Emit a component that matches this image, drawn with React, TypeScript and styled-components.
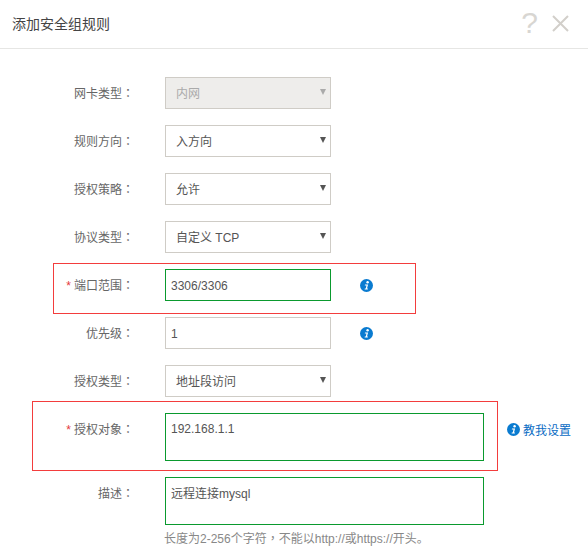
import React from 'react';
import styled, { createGlobalStyle } from 'styled-components';

const GlobalStyle = createGlobalStyle`
  html, body {
    margin: 0;
    background: #fff;
  }
  body {
    font-family: "Liberation Sans", "Noto Sans CJK SC", sans-serif;
    font-size: 12px;
    color: #666;
  }
`;

function InfoIcon() {
  return (
    <svg width="13" height="13" viewBox="0 0 13 13" aria-hidden="true">
      <circle cx="6.5" cy="6.5" r="6.5" fill="#0a7bd0" />
      <circle cx="7.6" cy="3.2" r="1.2" fill="#fff" />
      <path d="M5 5.4h3.1L7 9.6h1l-.2 1H4.6l.2-1h.9l.8-3.2H4.8z" fill="#fff" />
    </svg>
  );
}

function SelectField({ value, disabled }: { value: string; disabled?: boolean }) {
  return (
    <SelectWrap $disabled={disabled}>
      <SelectBox defaultValue={value} disabled={disabled}>
        <option>{value}</option>
      </SelectBox>
    </SelectWrap>
  );
}

function App() {
  return (
    <>
      <GlobalStyle />
      <Dialog>
        <Header>
          <Title>添加安全组规则</Title>
          <HeaderIcons>
            <HelpMark>?</HelpMark>
            <svg width="17" height="17" viewBox="0 0 17 17" aria-hidden="true">
              <path d="M1 1l15 15M16 1L1 16" stroke="#d2cfca" strokeWidth="2" fill="none" />
            </svg>
          </HeaderIcons>
        </Header>
        <Form>
          <Row>
            <Label>网卡类型<Centered>：</Centered></Label>
            <SelectField value="内网" disabled />
          </Row>
          <Row>
            <Label>规则方向<Centered>：</Centered></Label>
            <SelectField value="入方向" />
          </Row>
          <Row>
            <Label>授权策略<Centered>：</Centered></Label>
            <SelectField value="允许" />
          </Row>
          <Row>
            <Label>协议类型<Centered>：</Centered></Label>
            <SelectField value="自定义 TCP" />
          </Row>
          <Row>
            <PortMark />
            <Label><Star>*</Star>端口范围<Centered>：</Centered></Label>
            <TextInput $marked defaultValue="3306/3306" readOnly />
            <Aside><InfoIcon /></Aside>
          </Row>
          <Row>
            <Label>优先级<Centered>：</Centered></Label>
            <TextInput defaultValue="1" readOnly />
            <Aside><InfoIcon /></Aside>
          </Row>
          <Row>
            <Label>授权类型<Centered>：</Centered></Label>
            <SelectField value="地址段访问" />
          </Row>
          <Row>
            <ObjectMark />
            <Label><Star>*</Star>授权对象<Centered>：</Centered></Label>
            <TextArea $top={8} defaultValue="192.168.1.1" readOnly />
            <HelpLink><InfoIcon />教我设置</HelpLink>
          </Row>
          <Row>
            <Label>描述<Centered>：</Centered></Label>
            <div>
              <TextArea $top={6} defaultValue="远程连接mysql" readOnly />
              <Hint>长度为2-256个字符<Centered>，</Centered>不能以http://或https://开头。</Hint>
            </div>
          </Row>
        </Form>
      </Dialog>
    </>
  );
}

const Dialog = styled.div`
  width: 588px;
  height: 559px;
  overflow: hidden;
`;

const Header = styled.header`
  display: flex;
  align-items: center;
  justify-content: space-between;
  box-sizing: border-box;
  height: 49px;
  padding: 0 19px 2px 12px;
  border-bottom: 1px solid #e6e6e4;
`;

const Title = styled.h1`
  margin: 0;
  font-size: 14px;
  font-weight: 400;
  color: #444;
`;

const HeaderIcons = styled.div`
  display: flex;
  align-items: center;
  gap: 14px;
`;

const HelpMark = styled.span`
  font-size: 30px;
  line-height: 30px;
  color: #d8d6d2;
`;

const Form = styled.div`
  display: flex;
  flex-direction: column;
  gap: 16px;
  padding-top: 28px;
`;

const Row = styled.div`
  position: relative;
  display: flex;
  align-items: flex-start;
`;

const Label = styled.label`
  flex: none;
  box-sizing: border-box;
  width: 165px;
  height: 32px;
  padding-right: 31px;
  line-height: 34px;
  text-align: right;
  color: #666;
`;

/* traditional-chinese punctuation sits in the middle of its cell */
const Centered = styled.span`
  font-family: "Noto Sans CJK TC", sans-serif;
  line-height: 1;
`;

const Star = styled.span`
  margin-right: 3px;
  color: #e4393c;
`;

const SelectWrap = styled.div<{ $disabled?: boolean }>`
  position: relative;
  width: 166px;
  height: 32px;

  &::after {
    content: '';
    position: absolute;
    top: 12px;
    right: 5px;
    border-style: solid;
    border-width: 6px 3px 0;
    border-color: ${(p) => (p.$disabled ? '#aaa' : '#555')} transparent transparent;
    pointer-events: none;
  }
`;

const SelectBox = styled.select`
  display: block;
  box-sizing: border-box;
  width: 100%;
  height: 100%;
  padding: 2px 10px 0;
  appearance: none;
  border: 1px solid #cfccc6;
  border-radius: 0;
  outline: none;
  background: #fff;
  font: inherit;
  color: #555;
  opacity: 1;

  &:disabled {
    background: #eeedeb;
    color: #aaa;
  }
`;

const TextInput = styled.input<{ $marked?: boolean }>`
  box-sizing: border-box;
  width: 166px;
  height: 32px;
  padding: 2px 5px 0;
  border: 1px solid ${(p) => (p.$marked ? '#0a9a2e' : '#cfccc6')};
  outline: none;
  font: inherit;
  color: #555;
`;

const TextArea = styled.textarea<{ $top: number }>`
  display: block;
  box-sizing: border-box;
  width: 319px;
  height: 48px;
  padding: ${(p) => p.$top}px 5px 6px;
  border: 1px solid #0a9a2e;
  outline: none;
  resize: none;
  font: inherit;
  color: #555;
`;

const Aside = styled.span`
  display: flex;
  align-items: center;
  height: 32px;
  margin-left: 29px;
`;

const HelpLink = styled.a`
  display: flex;
  align-items: center;
  gap: 3px;
  height: 32px;
  margin-left: 23px;
  color: #0a6cc4;
`;

const Hint = styled.p`
  margin: 5px 0 0 -1px;
  line-height: 18px;
  color: #888;
`;

const PortMark = styled.div`
  position: absolute;
  top: -6px;
  left: 53px;
  width: 363px;
  height: 51px;
  box-sizing: border-box;
  border: 1px solid #f33d3d;
  pointer-events: none;
`;

const ObjectMark = styled.div`
  position: absolute;
  top: -12px;
  left: 32px;
  width: 466px;
  height: 70px;
  box-sizing: border-box;
  border: 1px solid #f33d3d;
  pointer-events: none;
`;

export default App;
